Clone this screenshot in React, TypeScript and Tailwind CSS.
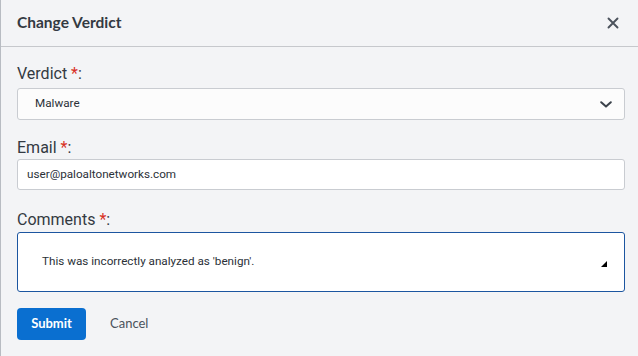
function Label({ children }: { children: React.ReactNode }) {
  return (
    <div className="font-['Roboto',sans-serif] text-[16px] leading-[20px] text-[#333a42]">
      {children} <span className="text-[#d93025]">*</span>:
    </div>
  );
}

export default function App() {
  return (
    <div className="h-[356px] w-[638px] overflow-hidden border-l border-[#b8bcc2] bg-[#f3f4f6]">
      <div className="flex h-[47px] items-center justify-between border-b border-[#c6c8cc] pl-[16px] pr-[19px]">
        <h2 className="pb-[1px] font-['Lato',sans-serif] text-[15.5px] font-bold text-[#333a42]">
          Change Verdict
        </h2>
        <svg width="12" height="12" viewBox="0 0 12 12" className="text-[#4b525c]">
          <path d="M1.5 1.5L10.5 10.5M10.5 1.5L1.5 10.5" stroke="currentColor" strokeWidth="1.9" strokeLinecap="round" />
        </svg>
      </div>

      <div className="flex flex-col pl-[16px] pr-[13px] pt-[17px]">
        <Label>Verdict</Label>
        <div className="mt-[4px] flex h-[32px] items-center justify-between rounded-[3px] border border-[#c9ccd1] bg-[#fcfcfc] pl-[17px] pr-[12px]">
          <span className="font-['Roboto',sans-serif] text-[11.7px] text-[#2b3138]">Malware</span>
          <svg width="12" height="7" viewBox="0 0 12 7" className="text-[#3b424b]">
            <path d="M1.2 1.2L6 5.6L10.8 1.2" fill="none" stroke="currentColor" strokeWidth="2" strokeLinecap="round" strokeLinejoin="round" />
          </svg>
        </div>

        <div className="mt-[18px]">
          <Label>Email</Label>
        </div>
        <div className="mt-[1px] flex h-[31px] items-center rounded-[3px] border border-[#c9ccd1] bg-white pl-[9px]">
          <span className="font-['Roboto',sans-serif] text-[11.7px] text-[#2b3138]">
            user@paloaltonetworks.com
          </span>
        </div>

        <div className="mt-[20px]">
          <Label>Comments</Label>
        </div>
        <div className="relative mt-[2px] flex h-[60px] items-center rounded-[3px] border border-[#1c56a0] bg-white pl-[24px]">
          <span className="font-['Roboto',sans-serif] text-[11.7px] text-[#2b3138]">
            This was incorrectly analyzed as 'benign'.
          </span>
          <div className="absolute right-[17px] top-[28px] h-0 w-0 border-b-[6px] border-l-[6px] border-b-black border-l-transparent" />
        </div>

        <div className="mt-[16px] flex items-center gap-[24px]">
          <button className="h-[32px] w-[69px] rounded-[4px] bg-[#0a6fd0] font-['Lato',sans-serif] text-[13px] font-bold text-white">
            Submit
          </button>
          <button className="font-['Lato',sans-serif] text-[13px] text-[#4a525c]">Cancel</button>
        </div>
      </div>
    </div>
  );
}
